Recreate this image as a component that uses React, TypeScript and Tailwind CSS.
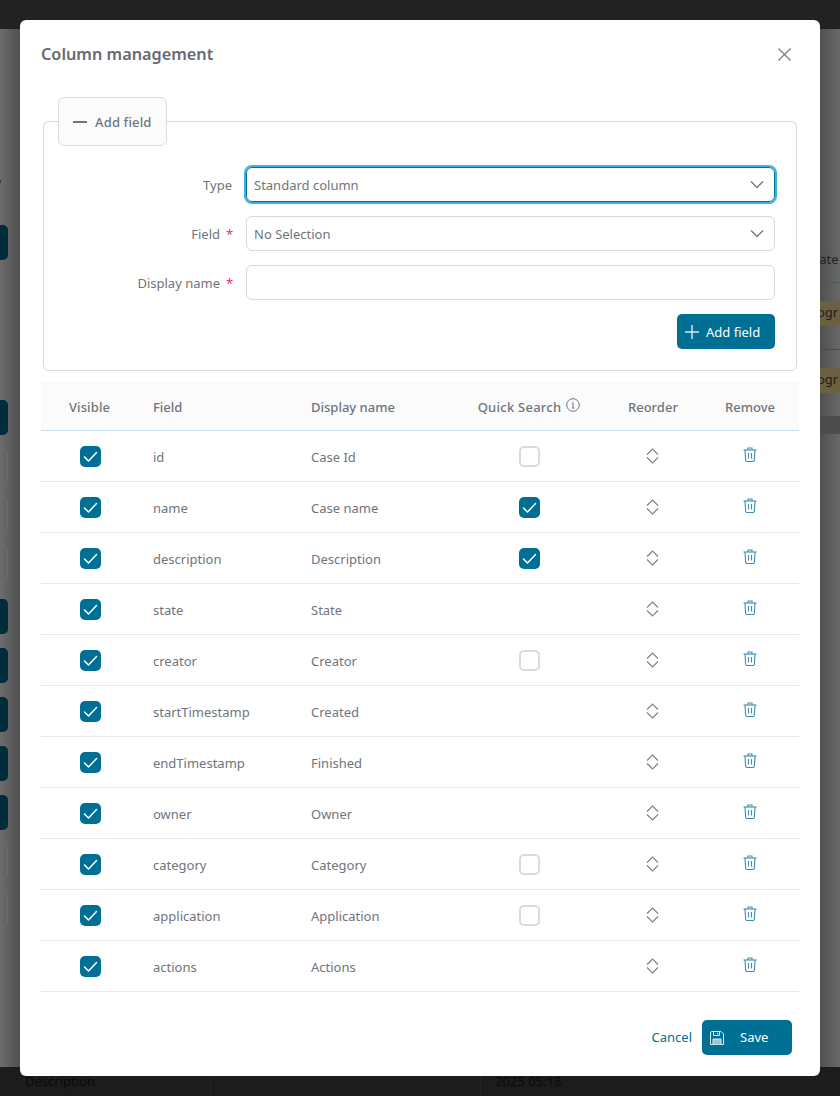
import React from "react";

const checkbox = (on: boolean) =>
  on ? (
    <span className="flex h-[21px] w-[21px] items-center justify-center rounded-[5px] bg-[#006f94]">
      <svg width="15" height="15" viewBox="0 0 15 15" fill="none" stroke="#fff" strokeWidth="1.5" strokeLinecap="round" strokeLinejoin="round">
        <path d="M1.5 8 L5.5 12 L13.5 3.5" />
      </svg>
    </span>
  ) : (
    <span className="block h-[21px] w-[21px] rounded-[5px] border-2 border-[#d9d9de] bg-white" />
  );

const Chevron = () => (
  <svg width="14" height="9" viewBox="0 0 14 9" fill="none" stroke="#7a7d85" strokeWidth="1.5">
    <path d="M1 1.5 L7 7.5 L13 1.5" />
  </svg>
);

const Reorder = () => (
  <svg width="13" height="16" viewBox="0 0 13 16" fill="none" stroke="#7f828a" strokeWidth="1.2">
    <path d="M1 6.5 L6.5 1 L12 6.5" />
    <path d="M1 9.5 L6.5 15 L12 9.5" />
  </svg>
);

const Trash = () => (
  <svg width="14" height="15" viewBox="0 0 14 15" fill="none" stroke="#3b8fae" strokeWidth="1.1">
    <path d="M0.5 3 H13.5" />
    <path d="M5 3 V1 H9 V3" />
    <path d="M2 3 L2.6 13 Q2.7 14.5 4 14.5 H10 Q11.3 14.5 11.4 13 L12 3" />
    <path d="M5.5 6 V11.5 M8.5 6 V11.5" />
  </svg>
);

const rows: [string, string, boolean | null][] = [
  ["id", "Case Id", false],
  ["name", "Case name", true],
  ["description", "Description", true],
  ["state", "State", null],
  ["creator", "Creator", false],
  ["startTimestamp", "Created", null],
  ["endTimestamp", "Finished", null],
  ["owner", "Owner", null],
  ["category", "Category", false],
  ["application", "Application", false],
  ["actions", "Actions", null],
];

const leftItems = [
  { top: 225, dark: true },
  { top: 400, dark: true },
  { top: 448, dark: false },
  { top: 497, dark: false },
  { top: 546, dark: false },
  { top: 599, dark: true },
  { top: 648, dark: true },
  { top: 697, dark: true },
  { top: 746, dark: true },
  { top: 795, dark: true },
  { top: 844, dark: false },
  { top: 893, dark: false },
];

const grid = "grid grid-cols-[112px_158px_167px_142px_98px_91px]";

const Field = ({ label, req, children }: { label: string; req?: boolean; children: React.ReactNode }) => (
  <div className="flex items-center">
    <div className={req ? "flex w-[176px] justify-end pt-[2px] text-[13px] text-[#70747c]" : "flex w-[176px] justify-end pr-[1px] pt-[2px] text-[13px] text-[#70747c]"}>
      <span>{label}</span>
      {req ? <span className="ml-[6px] w-[7px] text-[#e8315f]">*</span> : null}
    </div>
    <div className="ml-[13px]">{children}</div>
  </div>
);

export default function App() {
  return (
    <div
      className="relative h-[1096px] w-[840px] overflow-hidden bg-[#5c5c5c] text-[13px] text-[#70747c]"
      style={{ fontFamily: '"Noto Sans", "Open Sans", sans-serif' }}
    >
      {/* dimmed page behind the dialog */}
      <div className="flex h-full flex-col">
        <div className="h-[29px] bg-[#222222]" />
        <div className="flex-1 bg-[linear-gradient(90deg,#6c6c6c_0px,#505050_20px,#505050_820px,#686868_840px)]" />
        <div className="relative h-[29px] bg-[#1c1c1c] pl-[25px] pt-[4px] text-[13px] leading-[20px] text-[#0a0a0a]">
          Description
          <span className="absolute left-[495px] top-[4px]">2025 05:18</span>
          <span className="absolute left-[480px] top-0 h-full w-px bg-[#242424]" />
          <span className="absolute left-[210px] top-0 h-full w-px bg-[#242424]" />
        </div>
      </div>
      {leftItems.map((it) => (
        <div
          key={it.top}
          className={
            it.dark
              ? "absolute left-[-10px] h-[35px] w-[18px] rounded-[5px] bg-[#002c3b]"
              : "absolute left-[-10px] h-[35px] w-[18px] rounded-[5px] border border-[#6d6d6d]"
          }
          style={{ top: it.top }}
        />
      ))}
      <div className="absolute left-0 top-[180px] h-[3px] w-px bg-[#333333]" />
      <div className="absolute left-[810px] top-[249px] w-[30px] overflow-hidden whitespace-nowrap pl-[3px] text-[13px] leading-[20px] text-[#222222]">cate</div>
      <div className="absolute left-[810px] top-[282px] h-px w-[30px] bg-[#4a5a58]" />
      <div className="absolute left-[810px] top-[301px] h-[25px] w-[30px] overflow-hidden bg-[#6b6040] pl-[7px] text-[13px] leading-[22px] text-[#1d1d1d]">ogr</div>
      <div className="absolute left-[810px] top-[349px] h-px w-[30px] bg-[#4a4a4a]" />
      <div className="absolute left-[810px] top-[368px] h-[25px] w-[30px] overflow-hidden bg-[#6b6040] pl-[7px] text-[13px] leading-[22px] text-[#1d1d1d]">ogr</div>
      <div className="absolute left-[810px] top-[416px] h-[18px] w-[30px] bg-[#4c4c4c]" />

      {/* dialog */}
      <div className="absolute left-[20px] top-[20px] flex h-[1056px] w-[800px] flex-col rounded-[6px] bg-white">
        <div className="flex h-[77px] items-start justify-between pl-[21px] pr-[29px]">
          <h1 className="mt-[22px] text-[16.25px] font-semibold leading-[24px] text-[#666a73]">Column management</h1>
          <svg className="mt-[28px]" width="13" height="13" viewBox="0 0 13 13" fill="none" stroke="#7a7d85" strokeWidth="1.3">
            <path d="M0.5 0.5 L12.5 12.5 M12.5 0.5 L0.5 12.5" />
          </svg>
        </div>

        {/* collapsible add-field panel */}
        <div className="relative ml-[23px] mt-[24px] h-[250px] w-[754px] rounded-[6px] border border-[#d8d8d8] px-[13px] pt-[45px]">
          <div className="absolute left-[14px] top-[-25px] flex h-[49px] w-[109px] items-center rounded-[6px] border border-[#dcdcdc] bg-[#fbfbfb] pl-[14px] text-[13px] font-medium">
            <span className="block h-[2px] w-[14px] bg-[#6f737b]" />
            <span className="ml-[8px] pt-[2px] tracking-[0.15px]">Add field</span>
          </div>
          <div className="flex flex-col gap-[14px]">
            <Field label="Type">
              <div className="flex h-[35px] w-[529px] items-center justify-between rounded-[6px] border border-[#006f94] pl-[7px] pr-[10px] outline-2 outline-[#3bb3dc]">
                <span className="pt-[2px]">Standard column</span>
                <Chevron />
              </div>
            </Field>
            <Field label="Field" req>
              <div className="flex h-[35px] w-[529px] items-center justify-between rounded-[6px] border border-[#d8d8d8] pl-[7px] pr-[10px]">
                <span className="pt-[2px]">No Selection</span>
                <Chevron />
              </div>
            </Field>
            <Field label="Display name" req>
              <div className="h-[35px] w-[529px] rounded-[6px] border border-[#d8d8d8]" />
            </Field>
          </div>
          <div className="mt-[14px] flex justify-end pr-[8px]">
            <button className="flex h-[35px] w-[98px] items-center rounded-[5px] bg-[#006f94] pl-[8px] text-[13px] text-white">
              <svg width="14" height="14" viewBox="0 0 14 14" stroke="#dbeaf0" strokeWidth="1.4">
                <path d="M7 0 V14 M0 7 H14" />
              </svg>
              <span className="ml-[7px] pt-[2px]">Add field</span>
            </button>
          </div>
        </div>

        {/* table */}
        <div className="ml-[21px] mt-[11px] w-[758px]">
          <div className={`${grid} h-[49px] items-center border-b border-[#c9e0ea] bg-[#fbfbfb] pt-[3px] text-[13px] font-medium`}>
            <div className="pl-[28px] tracking-[0.1px]">Visible</div>
            <div>Field</div>
            <div>Display name</div>
            <div className="flex items-center justify-center pr-[40px]">
              <span className="whitespace-nowrap tracking-[0.25px]">Quick Search</span>
              <svg className="mb-[5px] ml-[5px] shrink-0" width="14" height="14" viewBox="0 0 14 14" fill="none" stroke="#6f737b" strokeWidth="1">
                <circle cx="7" cy="7" r="6.3" />
                <path d="M6 5.5 H7 V10 M5.8 10 H8.2 M7 3.4 V4.4" />
              </svg>
            </div>
            <div className="pl-[8px]">Reorder</div>
            <div className="pl-[7px]">Remove</div>
          </div>
          {rows.map(([field, display, quick]) => (
            <div key={field} className={`${grid} h-[51px] items-center border-b border-[#e8e8e8]`}>
              <div className="pl-[39px]">{checkbox(true)}</div>
              <div className="pt-[3px]">{field}</div>
              <div className="pt-[3px]">{display}</div>
              <div className="pl-[41px]">{quick === null ? null : checkbox(quick)}</div>
              <div className="pl-[26px] pb-[1px]"><Reorder /></div>
              <div className="pl-[25px] pb-[4px]"><Trash /></div>
            </div>
          ))}
        </div>

        {/* footer */}
        <div className="mt-[28px] flex items-center justify-end pr-[28px]">
          <span className="mr-[10px] pt-[1px] text-[13px] text-[#006f94]">Cancel</span>
          <button className="flex h-[35px] w-[90px] items-center rounded-[5px] bg-[#006f94] pl-[8px] text-[13px] text-white">
            <svg width="14" height="14" viewBox="0 0 14 14" fill="none" stroke="#dbeaf0" strokeWidth="1">
              <path d="M0.5 2 Q0.5 0.5 2 0.5 H11 L13.5 3 V13.5 H0.5 Z" />
              <path d="M3.5 0.5 V4.5 H9.5 V0.5 M7.5 1.8 V3.2" />
              <path d="M3 13.5 V8 H11 V13.5" fill="#9cc4d4" />
            </svg>
            <span className="ml-[16px] pt-[1px]">Save</span>
          </button>
        </div>
      </div>
    </div>
  );
}
